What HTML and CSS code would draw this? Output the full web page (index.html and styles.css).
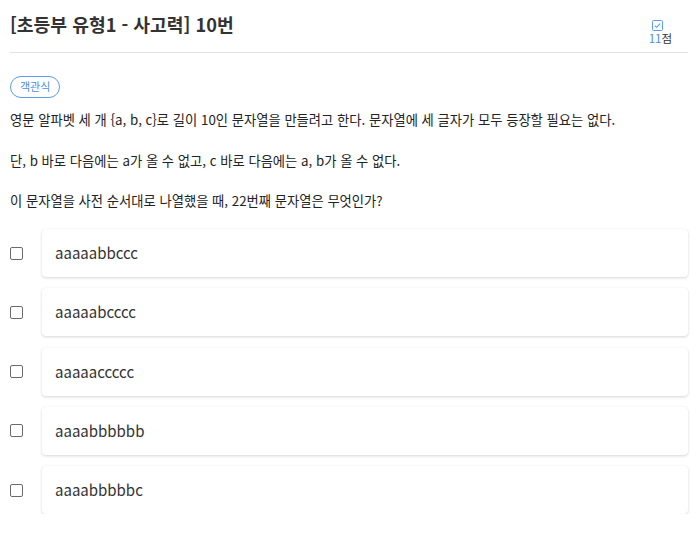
FILE: index.html
```html
<!DOCTYPE html>
<html lang="ko">
<head>
<meta charset="utf-8">
<link rel="stylesheet" href="styles.css">
</head>
<body>
<div class="page">
  <header class="head">
    <h1 class="title">[초등부 유형1 - 사고력] 10번</h1>
    <div class="score">
      <svg class="score-icon" width="11" height="11" viewBox="0 0 11 11"><rect x="0.5" y="0.5" width="10" height="10" rx="1" fill="none" stroke="#5b9cf0" stroke-width="1"/><path d="M2.8 5.6 L4.6 7.3 L8.2 3.6" fill="none" stroke="#5b9cf0" stroke-width="1.1"/></svg>
      <div class="score-text"><span class="pts">11</span>점</div>
    </div>
  </header>
  <div class="badge">객관식</div>
  <p class="q">영문 알파벳 세 개 {a, b, c}로 길이 10인 문자열을 만들려고 한다. 문자열에 세 글자가 모두 등장할 필요는 없다.</p>
  <p class="q">단, b 바로 다음에는 a가 올 수 없고, c 바로 다음에는 a, b가 올 수 없다.</p>
  <p class="q">이 문자열을 사전 순서대로 나열했을 때, 22번째 문자열은 무엇인가?</p>
  <ul class="options">
    <li class="opt"><span class="cb"></span><div class="card">aaaaabbccc</div></li>
    <li class="opt"><span class="cb"></span><div class="card">aaaaabcccc</div></li>
    <li class="opt"><span class="cb"></span><div class="card">aaaaaccccc</div></li>
    <li class="opt"><span class="cb"></span><div class="card">aaaabbbbbb</div></li>
    <li class="opt"><span class="cb"></span><div class="card">aaaabbbbbc</div></li>
  </ul>
</div>
</body>
</html>
```
FILE: styles.css
```css
html, body { margin: 0; padding: 0; background: #fff; }
body { font-family: "Noto Sans CJK KR", "Noto Sans", sans-serif; color: #222; }
.page { padding: 0 10px 0 10px; }
.head {
  display: flex; justify-content: space-between; align-items: flex-start;
  border-bottom: 1px solid #e4e4e8; height: 53px; box-sizing: border-box;
}
.title { margin: 0; padding-top: 9px; font-size: 18.2px; font-weight: 700; color: #333; line-height: 30px; }
.score { display: flex; flex-direction: column; align-items: center; padding-top: 20px; margin-right: 16px; }
.score-icon { display: block; margin-left: -6px; }
.score-text { font-size: 11.5px; line-height: 14px; color: #333; }
.pts { color: #4a8fe7; }
.badge {
  display: inline-block; margin-top: 23px; height: 22px; box-sizing: border-box;
  padding: 0 9px; border: 1.5px solid #5b9cf0; border-radius: 11px;
  font-size: 11px; line-height: 19px; color: #4a8fe7;
}
.q { margin: 11px 0 0 0; font-size: 13.3px; line-height: 22px; color: #222; }
.q + .q { margin-top: 18.5px; }
.options { list-style: none; margin: 17px 0 0 0; padding: 0; display: flex; flex-direction: column; gap: 11.25px; }
.opt { display: flex; align-items: center; }
.cb {
  width: 13px; height: 13px; box-sizing: border-box; border: 1.3px solid #6b6b6b;
  border-radius: 2px; margin-right: 19px; flex: none;
}
.card {
  flex: 1; height: 48px; box-sizing: border-box; border-radius: 4px; background: #fff;
  box-shadow: 0 1px 3px rgba(0,0,0,0.16), 0 0 1px rgba(0,0,0,0.06);
  padding-left: 13px; font-size: 15px; line-height: 48px; color: #333;
}
```
